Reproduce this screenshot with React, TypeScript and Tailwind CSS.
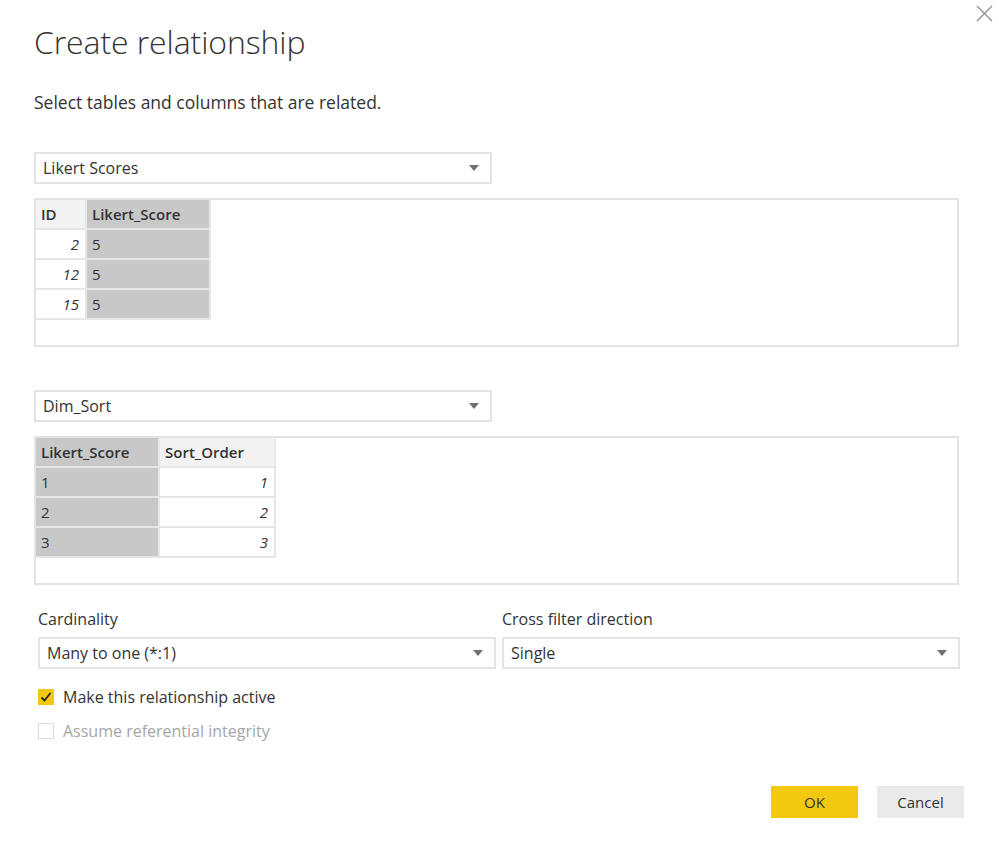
import React from "react";

const font = { fontFamily: '"Open Sans", "Noto Sans", sans-serif' };

function Arrow() {
  return (
    <svg width="10" height="6" viewBox="0 0 10 6" className="shrink-0">
      <path d="M0 0 L10 0 L5 6 Z" fill="#6f6f6f" />
    </svg>
  );
}

function Dropdown({ label, className }: { label: string; className: string }) {
  return (
    <div
      className={
        "h-[32px] border-2 border-[#e3e3e3] bg-white flex items-center justify-between pl-[7px] pr-[11px] text-[16px] text-[#333] " +
        className
      }
    >
      <span>{label}</span>
      <Arrow />
    </div>
  );
}

type Col = { name: string; width: number; selected: boolean; numeric: boolean };

function DataTable({ cols, rows }: { cols: Col[]; rows: string[][] }) {
  const template = cols.map((c) => `${c.width}px`).join(" ");
  return (
    <div className="h-[149px] border-2 border-[#e3e3e3] bg-white">
      <div
        className="inline-grid gap-[2px] bg-[#e6e6e6] border-r-2 border-b-2 border-[#e6e6e6]"
        style={{ gridTemplateColumns: template }}
      >
        {cols.map((c) => (
          <div
            key={c.name}
            className={
              "h-[28px] flex items-center px-[5px] text-[15px] font-semibold text-[#333] " +
              (c.selected ? "bg-[#c8c8c8]" : "bg-[#f2f2f2]")
            }
          >
            {c.name}
          </div>
        ))}
        {rows.map((r, i) =>
          r.map((v, j) => (
            <div
              key={i + "-" + j}
              className={
                "h-[28px] flex items-center text-[15px] text-[#333] " +
                (cols[j].selected ? "bg-[#c8c8c8] " : "bg-white ") +
                (cols[j].numeric ? "justify-end pr-[6px] italic" : "px-[5px]")
              }
            >
              {v}
            </div>
          ))
        )}
      </div>
    </div>
  );
}

export default function App() {
  return (
    <div className="relative w-[999px] h-[853px] bg-white text-[#333]" style={font}>
      <svg className="absolute left-[976px] top-[5px]" width="17" height="17" viewBox="0 0 17 17">
        <path d="M1 1 L16 16 M16 1 L1 16" stroke="#8a8a8a" strokeWidth="1.2" />
      </svg>
      <div className="pl-[34px] pr-[35px] pt-[20px]">
        <h1 className="text-[32px] font-light leading-[44px] text-[#333] tracking-[-0.1px]">
          Create relationship
        </h1>
        <p className="mt-[26px] text-[17.5px] leading-[24px] text-[#333]">
          Select tables and columns that are related.
        </p>

        <Dropdown label="Likert Scores" className="mt-[38px] w-[458px]" />
        <div className="mt-[14px] w-[925px]">
          <DataTable
            cols={[
              { name: "ID", width: 49, selected: false, numeric: true },
              { name: "Likert_Score", width: 122, selected: true, numeric: false },
            ]}
            rows={[
              ["2", "5"],
              ["12", "5"],
              ["15", "5"],
            ]}
          />
        </div>

        <Dropdown label="Dim_Sort" className="mt-[43px] w-[458px]" />
        <div className="mt-[14px] w-[925px]">
          <DataTable
            cols={[
              { name: "Likert_Score", width: 122, selected: true, numeric: false },
              { name: "Sort_Order", width: 114, selected: false, numeric: true },
            ]}
            rows={[
              ["1", "1"],
              ["2", "2"],
              ["3", "3"],
            ]}
          />
        </div>

        <div className="mt-[22px] pl-[4px] flex gap-[6px]">
          <div className="w-[458px]">
            <div className="text-[16px] leading-[24px]">Cardinality</div>
            <Dropdown label="Many to one (*:1)" className="mt-[6px] w-[458px]" />
          </div>
          <div className="w-[458px]">
            <div className="text-[16px] leading-[24px]">Cross filter direction</div>
            <Dropdown label="Single" className="mt-[6px] w-[458px]" />
          </div>
        </div>

        <div className="mt-[17px] pl-[4px] flex items-center gap-[9px] h-[22px]">
          <div className="w-[16px] h-[16px] bg-[#f2c811] flex items-center justify-center">
            <svg width="12" height="12" viewBox="0 0 12 12">
              <path d="M1.5 6.5 L4.5 9.5 L10.5 2" stroke="#222" strokeWidth="1.8" fill="none" />
            </svg>
          </div>
          <span className="text-[16px]">Make this relationship active</span>
        </div>
        <div className="mt-[12px] pl-[4px] flex items-center gap-[9px] h-[22px]">
          <div className="w-[16px] h-[16px] border border-[#dcdcdc] bg-white" />
          <span className="text-[16px] text-[#a6a6a6]">Assume referential integrity</span>
        </div>

        <div className="mt-[44px] flex justify-end gap-[19px]">
          <button className="w-[87px] h-[32px] bg-[#f2c811] text-[15px] text-[#333]">OK</button>
          <button className="w-[87px] h-[32px] bg-[#eaeaea] text-[15px] text-[#333]">Cancel</button>
        </div>
      </div>
    </div>
  );
}
